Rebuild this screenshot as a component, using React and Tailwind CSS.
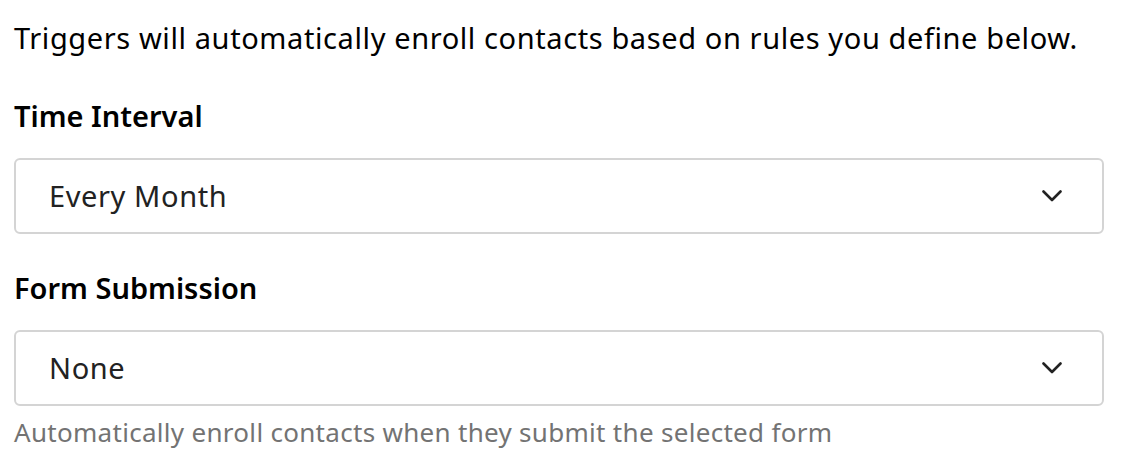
function Chevron() {
  return (
    <svg width="20" height="12" viewBox="0 0 20 12" fill="none" className="text-[#222]">
      <path d="M1.5 1.5 L10 10 L18.5 1.5" stroke="currentColor" strokeWidth="2.6" strokeLinecap="round" strokeLinejoin="round" />
    </svg>
  );
}

function Select({ value }) {
  return (
    <div className="flex h-[76px] items-center justify-between rounded-md border-2 border-[#d4d4d4] bg-white pl-[33px] pr-[40px]">
      <span className="text-[29px] tracking-[0.6px] text-[#222]">{value}</span>
      <Chevron />
    </div>
  );
}

export default function App() {
  return (
    <div className="min-h-[464px] w-[1118px] bg-white px-[14px] pt-[18px] font-['Noto_Sans',sans-serif] text-black">
      {/* Intro */}
      <p className="text-[29px] leading-[40px] tracking-[0.6px]">
        Triggers will automatically enroll contacts based on rules you define below.
      </p>

      <div className="mt-[38px]">
        <h3 className="mb-[22px] text-[29px] font-semibold leading-[40px]">Time Interval</h3>
        <Select value="Every Month" />
      </div>

      <div className="mt-[34px]">
        <h3 className="mb-[22px] text-[29px] font-semibold leading-[40px]">Form Submission</h3>
        <Select value="None" />
        <p className="mt-[8px] text-[26px] leading-[36px] tracking-[0.3px] text-[#737373]">
          Automatically enroll contacts when they submit the selected form
        </p>
      </div>
    </div>
  );
}
